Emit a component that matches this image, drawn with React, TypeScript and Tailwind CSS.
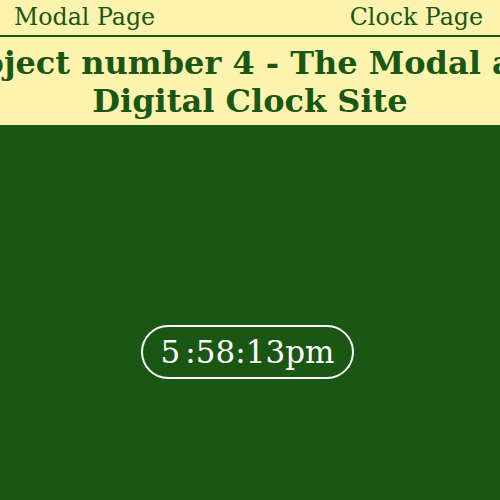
import React from "react";

export default function App() {
  return (
    <div className="min-h-[500px] bg-[#1a5714] font-['DejaVu_Serif',serif] overflow-hidden">
      <nav className="flex h-[37px] items-center justify-between border-b-2 border-[#1a5714] bg-[#fbf3ae] px-[14px] text-[23.7px] text-[#1a5714]">
        <a>Modal Page</a>
        <a className="mr-[3px]">Clock Page</a>
      </nav>
      <header className="flex h-[88px] justify-center overflow-hidden bg-[#fbf3ae]">
        <h1 className="w-[640px] shrink-0 pt-[7px] text-center text-[32px] font-bold leading-[38px] text-[#1a5714]">
          Project number 4 - The Modal and Digital Clock Site
        </h1>
      </header>
      <main className="flex justify-center pt-[200px]">
        <div className="ml-[-5px] rounded-full border-2 border-white px-[18px] text-[31px] leading-[50px] text-white">
          <span className="mr-[5px]">5</span>:58:13pm
        </div>
      </main>
    </div>
  );
}
